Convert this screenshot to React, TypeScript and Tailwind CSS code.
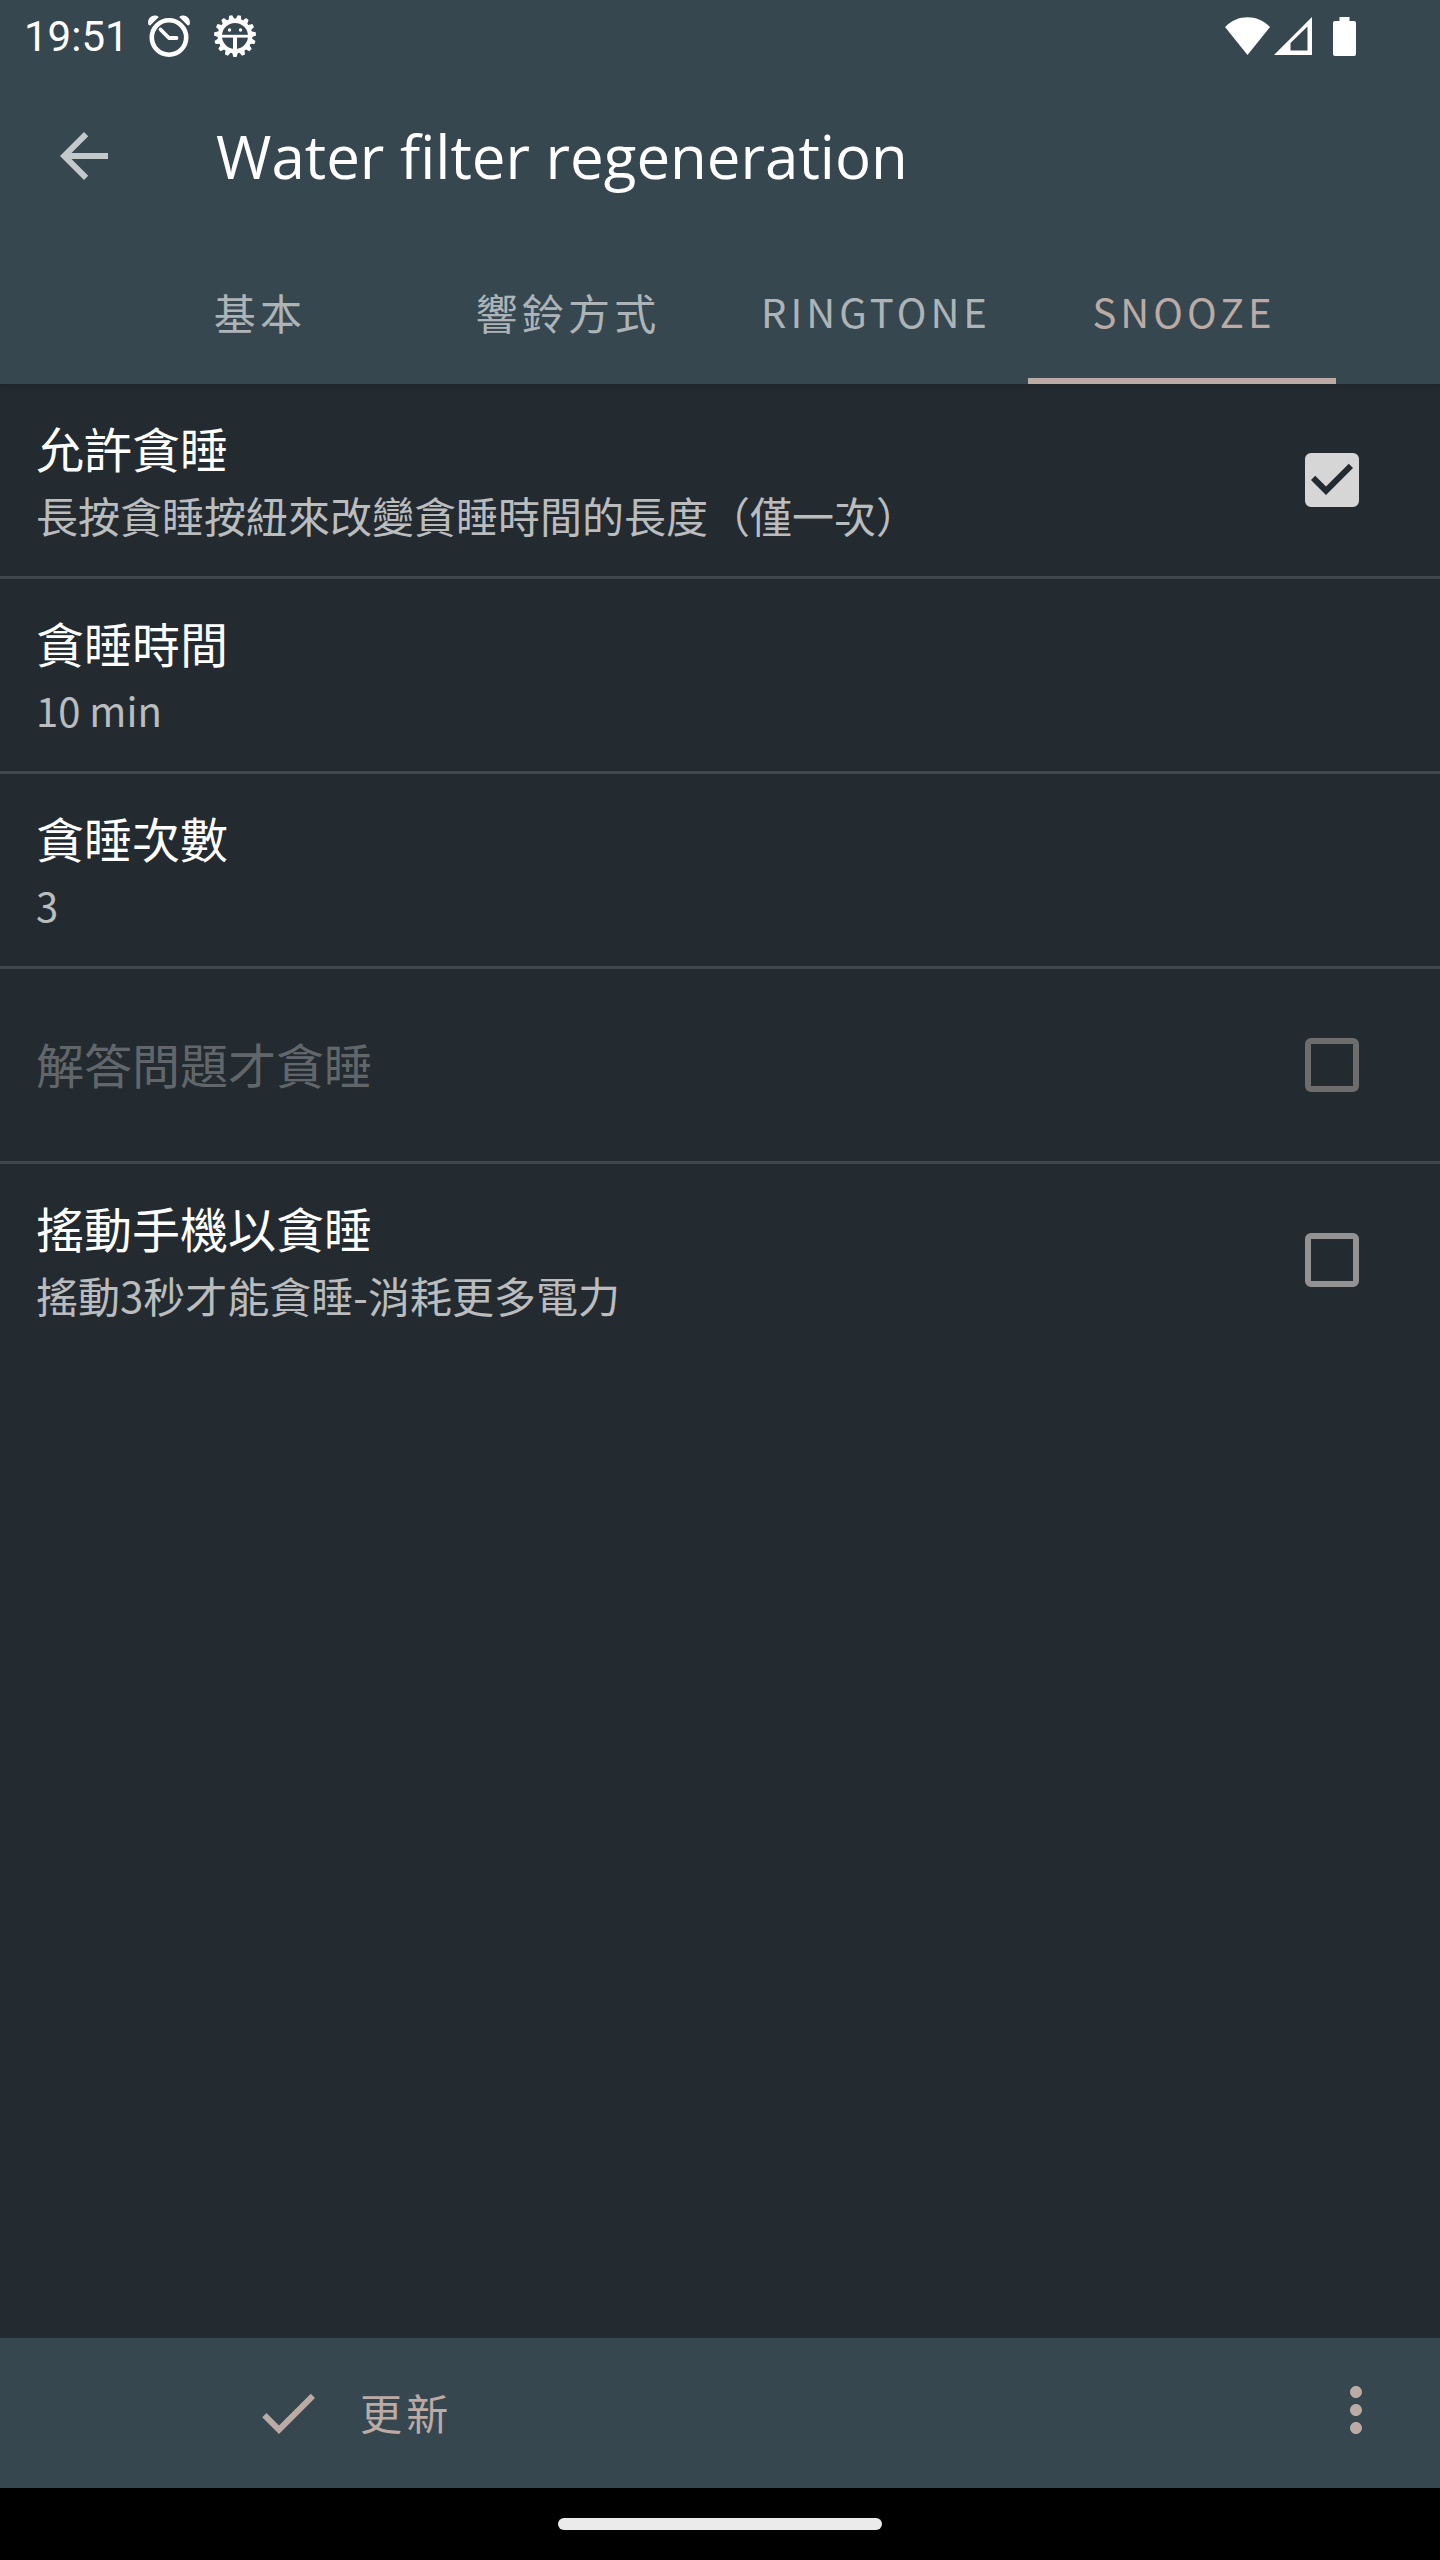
import { useState } from "react";

type Tab = { label: string; latin?: boolean };

const TABS: Tab[] = [
  { label: "基本" },
  { label: "響鈴方式" },
  { label: "RINGTONE", latin: true },
  { label: "SNOOZE", latin: true },
];

type Setting = {
  id: string;
  title: string;
  summary?: string;
  kind: "value" | "check";
  disabled?: boolean;
};

const SETTINGS: Setting[] = [
  { id: "allow", title: "允許貪睡", summary: "長按貪睡按紐來改變貪睡時間的長度（僅一次）", kind: "check" },
  { id: "duration", title: "貪睡時間", summary: "10 min", kind: "value" },
  { id: "count", title: "貪睡次數", summary: "3", kind: "value" },
  { id: "solve", title: "解答問題才貪睡", kind: "check", disabled: true },
  { id: "shake", title: "搖動手機以貪睡", summary: "搖動3秒才能貪睡-消耗更多電力", kind: "check" },
];

const GEAR_TEETH = Array.from({ length: 15 }, (_, i) => i * 24);

function AlarmIcon() {
  return (
    <svg viewBox="0 0 42 42" className="size-[42px]" fill="none" stroke="white" aria-hidden="true">
      <circle cx="21" cy="22.5" r="17.2" strokeWidth="4.6" />
      <path d="M12.5 14.5 L21 23 H28.5" strokeWidth="3.8" strokeLinecap="round" strokeLinejoin="round" />
      <path
        d="M0.6 10 C-2 3.6 5.2 -2.4 10.8 2 L2.2 10.4 Z M41.4 10 C44 3.6 36.8 -2.4 31.2 2 L39.8 10.4 Z"
        fill="white"
        stroke="none"
      />
    </svg>
  );
}

function GearIcon() {
  return (
    <svg viewBox="0 0 42 42" className="size-[42px]" fill="none" stroke="white" aria-hidden="true">
      <circle cx="21" cy="21" r="15.2" strokeWidth="4.4" />
      {GEAR_TEETH.map((angle) => (
        <path key={angle} d="M17.6 36 L19.4 42 H22.6 L24.4 36 Z" fill="white" stroke="none" transform={`rotate(${angle} 21 21)`} />
      ))}
      <path d="M7 21.2 H35" strokeWidth="2.8" />
      <path d="M21 21.2 V35" strokeWidth="4" />
      <circle cx="15.5" cy="15" r="1.7" fill="white" stroke="none" />
      <circle cx="26.5" cy="15" r="1.7" fill="white" stroke="none" />
    </svg>
  );
}

function StatusBar() {
  return (
    <div className="flex h-18 items-center justify-between pr-[84px] pl-6 text-white">
      <div className="flex items-center">
        <span className="w-[124px] pt-0.5 font-['Roboto'] text-[42px] leading-[72px]">19:51</span>
        <AlarmIcon />
        <span className="w-6" />
        <GearIcon />
      </div>
      <div className="flex items-center">
        <svg viewBox="0 0 45 38" className="h-[38px] w-[45px]" fill="white" aria-hidden="true">
          <path d="M22.5 38 L0 10 C12.5 -3 32.5 -3 45 10 Z" />
        </svg>
        <svg viewBox="0 0 38 38" className="ml-1 h-[38px] w-[38px]" fill="white" aria-hidden="true">
          <path fillRule="evenodd" d="M38 0 V38 H0 Z M33.5 9.5 L16.5 26 V33.5 H33.5 Z" />
        </svg>
        <svg viewBox="0 0 23 39" className="ml-[21px] h-[39px] w-[23px]" fill="white" aria-hidden="true">
          <path d="M6.5 0 H16.5 V4 H21 Q23 4 23 6 V37 Q23 39 21 39 H2 Q0 39 0 37 V6 Q0 4 2 4 H6.5 Z" />
        </svg>
      </div>
    </div>
  );
}

function SettingRow({ item, checked, onToggle }: { item: Setting; checked: boolean; onToggle: () => void }) {
  const text = (
    <span className={item.summary ? "flex flex-1 flex-col pt-0.5 text-left" : "flex flex-1 flex-col pb-1 text-left"}>
      <span className={item.disabled ? "text-5xl leading-[68px] text-white/30" : "text-5xl leading-[68px] text-white"}>
        {item.title}
      </span>
      {item.summary && (
        <span
          className={
            item.kind === "value"
              ? "text-[40px] leading-[68px] text-white/70"
              : "text-[42px] leading-[68px] text-white/70"
          }
        >
          {item.summary}
        </span>
      )}
    </span>
  );

  if (item.kind === "value") {
    return (
      <li>
        <button type="button" className="flex min-h-48 w-full items-center pr-[81px] pl-9">
          {text}
        </button>
      </li>
    );
  }

  return (
    <li>
      <label htmlFor={item.id} className="flex min-h-48 w-full items-center pr-[81px] pl-9">
        {text}
        <span className="relative size-[54px]">
          <input
            id={item.id}
            type="checkbox"
            checked={checked}
            disabled={item.disabled}
            onChange={onToggle}
            className="block size-[54px] appearance-none rounded-md border-6 border-[#929292] checked:border-[#d6d6d6] checked:bg-[#d6d6d6] disabled:border-[#6d6d6d]"
          />
          {checked && (
            <svg viewBox="3 3 18 18" className="pointer-events-none absolute inset-0 size-[54px]" aria-hidden="true">
              <path d="M10 17l-5-5 1.41-1.41L10 14.17l7.59-7.59L19 8z" fill="#232b30" />
            </svg>
          )}
        </span>
      </label>
    </li>
  );
}

export default function App() {
  const [active, setActive] = useState("SNOOZE");
  const [checked, setChecked] = useState<Record<string, boolean>>({ allow: true });

  return (
    <div lang="zh-Hant" className="flex min-h-screen flex-col bg-[#232b31] font-['Noto_Sans_CJK_TC',sans-serif]">
      <header className="relative bg-[#37474f] shadow-md">
        <StatusBar />
        <div className="flex h-42 items-center pl-12">
          <button type="button" aria-label="Back" className="size-18">
            <svg viewBox="0 0 24 24" className="size-18" fill="#c3c8ca" aria-hidden="true">
              <path d="M20 11H7.83l5.59-5.59L12 4l-8 8 8 8 1.41-1.41L7.83 13H20v-2z" />
            </svg>
          </button>
          <h1 className="ml-24 font-['Open_Sans',sans-serif] text-[60px] leading-[80px] text-white">
            Water filter regeneration
          </h1>
        </div>
        <div role="tablist" className="flex h-36 px-26">
          {TABS.map((tab) => (
            <button
              key={tab.label}
              type="button"
              role="tab"
              aria-selected={tab.label === active}
              onClick={() => setActive(tab.label)}
              className={
                tab.label === active
                  ? "flex-1 border-y-6 border-t-transparent border-b-[#bcaaa4] pb-0.5 pl-1 text-[#bcaaa4]"
                  : "flex-1 border-y-6 border-transparent pb-0.5 pl-1 text-white/60"
              }
            >
              <span className={tab.latin ? "text-[40px] tracking-widest" : "text-[42px] tracking-widest"}>{tab.label}</span>
            </button>
          ))}
        </div>
      </header>

      <main className="flex-1">
        <ul className="divide-y-3 divide-[#40484e]">
          {SETTINGS.map((item) => (
            <SettingRow
              key={item.id}
              item={item}
              checked={!!checked[item.id]}
              onToggle={() => setChecked((c) => ({ ...c, [item.id]: !c[item.id] }))}
            />
          ))}
        </ul>
      </main>

      <footer>
        <div className="flex h-[150px] items-center justify-between bg-[#37474f] pr-12 pl-63 text-[#bcaaa4]">
          <button type="button" className="flex items-center gap-9 text-[42px] tracking-widest">
            <svg viewBox="0 0 24 24" className="size-18" fill="currentColor" aria-hidden="true">
              <path d="M9 16.17L4.83 12l-1.42 1.41L9 19 21 7l-1.41-1.41z" />
            </svg>
            <span className="pb-1">更新</span>
          </button>
          <button type="button" aria-label="More options" className="mb-1.5 size-18">
            <svg viewBox="0 0 24 24" className="size-18" fill="currentColor" aria-hidden="true">
              <path d="M12 8c1.1 0 2-.9 2-2s-.9-2-2-2-2 .9-2 2 .9 2 2 2zm0 2c-1.1 0-2 .9-2 2s.9 2 2 2 2-.9 2-2-.9-2-2-2zm0 6c-1.1 0-2 .9-2 2s.9 2 2 2 2-.9 2-2-.9-2-2-2z" />
            </svg>
          </button>
        </div>
        <div className="flex h-18 items-center justify-center bg-black">
          <div className="h-3 w-81 rounded-full bg-[#ebebeb]" />
        </div>
      </footer>
    </div>
  );
}
